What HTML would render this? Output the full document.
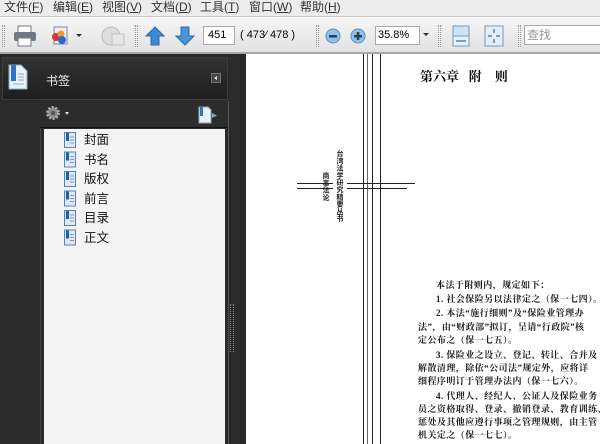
<!DOCTYPE html>
<html><head><meta charset="utf-8"><style>
*{margin:0;padding:0;box-sizing:border-box}
body{width:600px;height:444px;overflow:hidden;position:relative;background:#fff;font-family:"Liberation Sans","Noto Sans CJK SC",sans-serif;font-size:12px}
.abs{position:absolute}
#menu{left:0;top:0;width:600px;height:17px;background:#ececec;color:#333;font-size:12px;line-height:15px;border-bottom:1px solid #c8c8c8}
#menu span{position:absolute;top:0}
#tb{left:0;top:17px;width:600px;height:37px;background:linear-gradient(#f6f6f6,#e2e2e2);border-bottom:2px solid #a8a8a8}
.grip{position:absolute;top:8px;width:3px;height:22px;border-left:1px dotted #999;border-right:1px dotted #999}
#panel{left:0;top:54px;width:246px;height:390px;background:#2a2a2a}
.serif{font-family:"Liberation Serif","Noto Serif CJK SC",serif}
.bt{position:absolute;left:418px;font-size:9px;line-height:14px;color:#1a1a1a;font-family:"Liberation Serif","Noto Serif CJK SC",serif;letter-spacing:0.45px;white-space:nowrap;font-weight:bold}
.vl{position:absolute;width:1px;background:#222}
.vt{position:absolute;writing-mode:vertical-rl;font-size:7px;line-height:9px;letter-spacing:0.2px;font-weight:bold;color:#222;font-family:"Noto Sans CJK SC",sans-serif;white-space:nowrap}
</style></head><body>
<div id="menu" class="abs">
<span style="left:4px">文件(<u>F</u>)</span><span style="left:53px">编辑(<u>E</u>)</span><span style="left:102px">视图(<u>V</u>)</span><span style="left:151px">文档(<u>D</u>)</span><span style="left:200px">工具(<u>T</u>)</span><span style="left:249px">窗口(<u>W</u>)</span><span style="left:300px">帮助(<u>H</u>)</span>
</div>
<div id="tb" class="abs">
<div class="grip" style="left:2px"></div>
<svg class="abs" style="left:13px;top:8px" width="24" height="22"><rect x="5" y="1" width="13" height="7" fill="#fff" stroke="#777"/><rect x="1" y="7" width="22" height="9" rx="2" fill="#6d7a86"/><rect x="5" y="13" width="13" height="8" fill="#fff" stroke="#777"/></svg>
<svg class="abs" style="left:48px;top:8px" width="22" height="22"><rect x="6" y="2" width="13" height="17" fill="#eef" stroke="#789"/><circle cx="8" cy="12" r="4" fill="#d33"/><circle cx="13" cy="9" r="3.5" fill="#e93"/><circle cx="14" cy="15" r="4" fill="#36c"/></svg>
<div class="abs" style="left:76px;top:17px;border:3px solid transparent;border-top:3px solid #333"></div>
<svg class="abs" style="left:100px;top:7px" width="26" height="24"><circle cx="11" cy="12" r="9" fill="#ddd" stroke="#bbb"/><rect x="12" y="10" width="12" height="11" fill="#e6e6e6" stroke="#c3c3c3"/></svg>
<div class="grip" style="left:135px"></div>
<svg class="abs" style="left:145px;top:9px" width="20" height="20"><path d="M10 1 L19 10 L14 10 L14 19 L6 19 L6 10 L1 10Z" fill="#3c8ad6" stroke="#2a6aa8"/></svg>
<svg class="abs" style="left:175px;top:9px" width="20" height="20"><path d="M10 19 L19 10 L14 10 L14 1 L6 1 L6 10 L1 10Z" fill="#4c94d8" stroke="#2a6aa8"/></svg>
<div class="abs" style="left:203px;top:9px;width:32px;height:19px;background:#fff;border:1px solid #aaa;font-size:11px;line-height:17px;padding-left:4px">451</div>
<div class="abs" style="left:240px;top:10px;font-size:11px;line-height:17px">( 473⁄ 478 )</div>
<div class="grip" style="left:316px"></div>
<svg class="abs" style="left:325px;top:11px" width="16" height="16"><circle cx="8" cy="8" r="7" fill="#8fc0e8" stroke="#5a8fbf"/><rect x="4" y="7" width="8" height="2.5" fill="#245"/></svg>
<svg class="abs" style="left:350px;top:11px" width="16" height="16"><circle cx="8" cy="8" r="7" fill="#8fc0e8" stroke="#5a8fbf"/><rect x="4" y="7" width="8" height="2.5" fill="#245"/><rect x="6.8" y="4" width="2.5" height="8" fill="#245"/></svg>
<div class="abs" style="left:375px;top:9px;width:45px;height:19px;background:#fff;border:1px solid #aaa;font-size:11px;line-height:17px;padding-left:2px">35.8%</div>
<div class="abs" style="left:423px;top:16px;border:3px solid transparent;border-top:3px solid #333"></div>
<div class="grip" style="left:438px"></div>
<svg class="abs" style="left:452px;top:8px" width="18" height="22"><rect x="1" y="1" width="16" height="20" fill="#cfe3f5" stroke="#6a9cc8"/><rect x="1" y="11" width="16" height="10" fill="#e8f2fb" stroke="#6a9cc8"/><path d="M4 16 H14" stroke="#246" stroke-width="1"/></svg>
<svg class="abs" style="left:484px;top:8px" width="20" height="22"><rect x="1" y="1" width="18" height="20" fill="#e2eef9" stroke="#6a9cc8"/><path d="M10 4V8M10 14V18M4 11H8M12 11H16" stroke="#246"/></svg>
<div class="grip" style="left:518px"></div>
<div class="abs" style="left:524px;top:8px;width:80px;height:20px;background:#fff;border:1px solid #aaa;color:#999;font-size:12px;line-height:18px;padding-left:2px">查找</div>
</div>
<div id="panel" class="abs">
<div class="abs" style="left:2px;top:3px;width:226px;height:43px;background:linear-gradient(#333,#1e1e1e);border:1px solid #3c3c3c"></div>
<svg class="abs" style="left:8px;top:10px" width="20" height="26"><path d="M1 1H13L19 7V25H1Z" fill="#e8f0fa" stroke="#8ab"/><rect x="3" y="1" width="5" height="16" fill="#2a78c4"/><path d="M10 10H16M10 13H16M10 16H16M5 20H16" stroke="#9ab"/></svg>
<div class="abs" style="left:46px;top:18px;color:#eee;font-size:12px">书签</div>
<div class="abs" style="left:211px;top:19px;width:10px;height:10px;background:#444;border:1px solid #777"><div style="position:absolute;left:2px;top:2px;border:2.5px solid transparent;border-right:3px solid #eee;border-left:0"></div></div>
<div class="abs" style="left:40px;top:47px;width:1px;height:343px;background:#444"></div>
<div class="abs" style="left:40px;top:47px;width:188px;height:27px;background:#2c2c2c;border-bottom:1px solid #151515"></div>
<svg class="abs" style="left:45px;top:51px" width="16" height="16"><circle cx="8" cy="8" r="5.5" fill="#888" stroke="#aaa" stroke-width="3" stroke-dasharray="2 1.5"/><circle cx="8" cy="8" r="2" fill="#555"/></svg>
<div class="abs" style="left:65px;top:58px;border:2.5px solid transparent;border-top:3px solid #ddd"></div>
<svg class="abs" style="left:198px;top:52px" width="20" height="18"><path d="M1 1H10L13 4V17H1Z" fill="#e8f0fa" stroke="#8ab"/><rect x="2" y="1" width="3" height="9" fill="#2a78c4"/><path d="M14 7L19 9.5L14 12Z" fill="#7ab"/></svg>
<div class="abs" style="left:44px;top:75px;width:181px;height:315px;background:#f4f4f4"></div>
<div class="abs" style="left:228px;top:47px;width:1px;height:343px;background:#555"></div>
<div class="abs" style="left:230px;top:250px;width:4px;height:48px;border-left:1px dotted #888;border-right:1px dotted #888"></div>
</div>
<div class="abs" style="left:84px;top:131px;font-size:12.5px;line-height:19.5px;color:#111">封面<br>书名<br>版权<br>前言<br>目录<br>正文</div>
<svg class="abs" style="left:64px;top:132px" width="12" height="116">
<g id="bm"><path d="M0.5 0.5H11.5V15.5H0.5Z" fill="#dde9f6" stroke="#4d86bf"/><rect x="2" y="1" width="3" height="8" fill="#1d5fa8"/><path d="M6 5H10M6 8H10M6 11H10" stroke="#89a"/></g>
<use href="#bm" y="19.5"/><use href="#bm" y="39"/><use href="#bm" y="58.5"/><use href="#bm" y="78"/><use href="#bm" y="97.5"/>
</svg>
<div class="vl" style="left:363px;top:54px;height:390px"></div>
<div class="vl" style="left:367px;top:54px;height:390px;background:#666"></div>
<div class="vl" style="left:372px;top:54px;height:390px"></div>
<div class="vl" style="left:380px;top:54px;height:390px"></div>
<div class="abs" style="left:297px;top:183px;width:36px;height:1px;background:#222"></div>
<div class="abs" style="left:297px;top:188px;width:36px;height:1px;background:#222"></div>
<div class="abs" style="left:347px;top:183px;width:68px;height:1px;background:#222"></div>
<div class="abs" style="left:347px;top:188px;width:60px;height:1px;background:#222"></div>
<div class="vt" style="left:335px;top:150px">台湾法学研究精要丛书</div>
<div class="vt" style="left:321px;top:172px">商事法论</div>
<div class="abs serif" style="left:420px;top:66px;font-size:13px;font-weight:bold;color:#111;white-space:pre">第六章   附    则</div>
<div class="bt" style="top:278px;left:436px">本法于附则内，规定如下：</div>
<div class="bt" style="top:292px;left:436px">1. 社会保险另以法律定之（保一七四）。</div>
<div class="bt" style="top:306px;left:436px">2. 本法“施行细则”及“保险业管理办</div>
<div class="bt" style="top:320px">法”，由“财政部”拟订，呈请“行政院”核</div>
<div class="bt" style="top:333px">定公布之（保一七五）。</div>
<div class="bt" style="top:348px;left:436px">3. 保险业之设立、登记、转让、合并及</div>
<div class="bt" style="top:361px">解散清理，除依“公司法”规定外，应将详</div>
<div class="bt" style="top:374px">细程序明订于管理办法内（保一七六）。</div>
<div class="bt" style="top:389px;left:436px">4. 代理人、经纪人、公证人及保险业务</div>
<div class="bt" style="top:402px">员之资格取得、登录、撤销登录、教育训练、</div>
<div class="bt" style="top:415px">惩处及其他应遵行事项之管理规则，由主管</div>
<div class="bt" style="top:428px">机关定之（保一七七）。</div>
</body></html>
